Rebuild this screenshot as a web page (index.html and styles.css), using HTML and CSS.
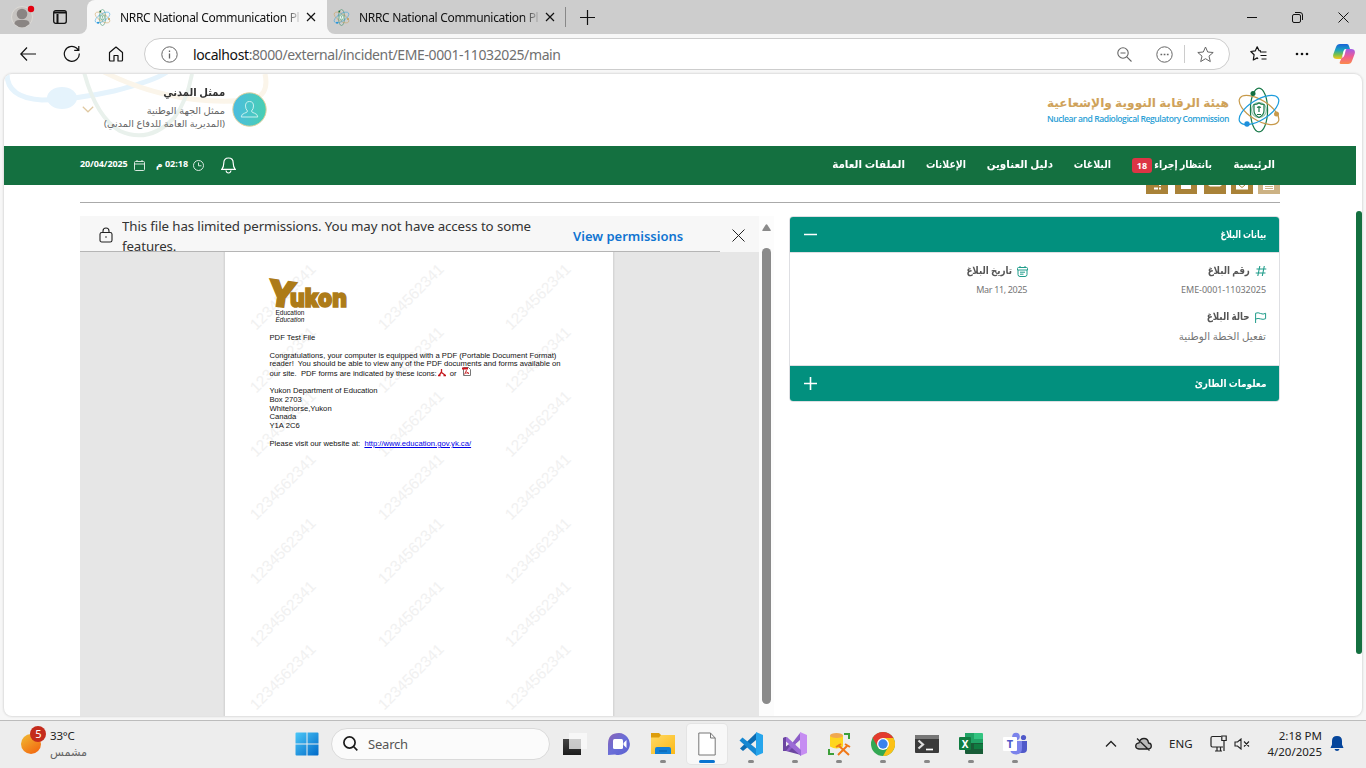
FILE: index.html
```html
<!DOCTYPE html>
<html lang="en">
<head>
<meta charset="utf-8">
<title>NRRC National Communication Platform</title>
<link rel="stylesheet" href="styles.css">
</head>
<body>
<svg class="defs" width="0" height="0">
  <defs>
    <linearGradient id="g-av" x1="0" x2="1"><stop offset="0" stop-color="#4cbce0"/><stop offset="1" stop-color="#48cfb2"/></linearGradient>
    <linearGradient id="g-sun" x1="0" y1="0" x2="0.7" y2="1"><stop offset="0" stop-color="#f1bd35"/><stop offset="1" stop-color="#f26a10"/></linearGradient>
    <linearGradient id="g-win" x1="0" y1="0" x2="1" y2="1"><stop offset="0" stop-color="#4cc8f8"/><stop offset="1" stop-color="#0069c8"/></linearGradient>
    <linearGradient id="g-dark" x1="0" y1="0" x2="0" y2="1"><stop offset="0" stop-color="#444"/><stop offset="1" stop-color="#1c1c1c"/></linearGradient>
    <linearGradient id="g-chat" x1="0" y1="0" x2="1" y2="1"><stop offset="0" stop-color="#8a63b5"/><stop offset=".5" stop-color="#6a6ed8"/><stop offset="1" stop-color="#5b5fcf"/></linearGradient>
    <linearGradient id="g-fold" x1="0" y1="0" x2="1" y2="1"><stop offset="0" stop-color="#ffd965"/><stop offset="1" stop-color="#fbb917"/></linearGradient>
    <linearGradient id="g-cop1" x1="0" y1="0" x2="0" y2="1"><stop offset="0" stop-color="#1a62d8"/><stop offset=".4" stop-color="#19a4c0"/><stop offset=".7" stop-color="#7bc04a"/><stop offset="1" stop-color="#fbc71c"/></linearGradient>
    <linearGradient id="g-cop2" x1="0" y1="0" x2="0" y2="1"><stop offset="0" stop-color="#a25be8"/><stop offset=".5" stop-color="#ee5c92"/><stop offset="1" stop-color="#fb8a4a"/></linearGradient>
    <symbol id="atom" viewBox="0 0 42 46">
      <g fill="none" stroke-width="1.200">
        <ellipse cx="21" cy="23" rx="8.600" ry="21.800" stroke="#1a7a4a"/>
        <ellipse cx="21" cy="23" rx="22.500" ry="10" transform="rotate(32 21 23)" stroke="#c79a4b"/>
        <ellipse cx="21" cy="23" rx="22.500" ry="10" transform="rotate(-32 21 23)" stroke="#1d9cdc"/>
        <circle cx="21" cy="23" r="7.500" stroke="#8fc3aa" fill="#eef6f2"/>
        <path d="M16 17.500q3 0 5-1.500 2 1.500 5 1.500v6q0 4.500-5 7-5-2.500-5-7z" stroke="#1a7a4a" fill="#fff"/>
        <path d="M21 20v5M19 27.500h4M19 20.500l2-.8 2 .8" stroke="#1a7a4a"/>
      </g>
      <circle cx="15" cy="6.500" r="2.500" fill="#146f40"/><circle cx="38.500" cy="27" r="2.500" fill="#c79a4b"/><circle cx="9" cy="37" r="2.700" fill="#1d8fdc"/>
    </symbol>
  </defs>
</svg>

<div class="tabstrip">
  <div class="strip-left">
    <svg class="profile" width="24" height="24" viewBox="0 0 24 24"><circle cx="11" cy="12" r="10.500" fill="#c6c3c0" stroke="#dcdad6"/><circle cx="11" cy="9" r="5.300" fill="#8a8583"/><path d="M3.500 19q0-4 5-4h5q5 0 5 4q-7.500 7-15 0z" fill="#8a8583"/><circle cx="20" cy="4" r="3.200" fill="#e3000f"/></svg>
    <svg class="workspaces" width="14" height="14" viewBox="0 0 14 14" fill="none" stroke="#111" stroke-width="1.300"><rect x=".7" y=".7" width="12.600" height="12.600" rx="2"/><path d="M1 2.500h12M4.500 4v9" stroke-width="2"/></svg>
  </div>
  <div class="tab active"><svg class="fav" width="17" height="17"><use href="#atom"/></svg><span class="tab-title">NRRC National Communication Pl</span><svg width="10" height="10" viewBox="0 0 10 10" stroke="#111" stroke-width="1.200"><path d="M1 1l8 8M9 1l-8 8"/></svg></div>
  <div class="tab-rest">
    <div class="tab"><svg class="fav" width="17" height="17"><use href="#atom"/></svg><span class="tab-title">NRRC National Communication Pl</span><svg width="10" height="10" viewBox="0 0 10 10" stroke="#111" stroke-width="1.200"><path d="M1 1l8 8M9 1l-8 8"/></svg></div>
    <i class="tab-sep"></i>
    <svg class="plus" width="15" height="15" viewBox="0 0 15 15" stroke="#111" stroke-width="1.200"><path d="M7.500 0v15M0 7.500h15"/></svg>
    <div class="win-buttons">
      <svg width="10" height="11" viewBox="0 0 10 11" stroke="#111"><path d="M0 5.500h10"/></svg>
      <svg width="11" height="11" viewBox="0 0 11 11" fill="none" stroke="#111"><rect x=".5" y="2.500" width="8" height="8" rx="1.500"/><path d="M3 .5h5q2.500 0 2.500 2.500v5"/></svg>
      <svg width="11" height="11" viewBox="0 0 11 11" stroke="#111"><path d="M.5.5l10 10M10.500.5l-10 10"/></svg>
    </div>
  </div>
</div>

<div class="toolbar">
  <div class="nav-buttons">
    <svg width="16" height="14" viewBox="0 0 16 14" fill="none" stroke="#111" stroke-width="1.200"><path d="M7 .5L.8 7 7 13.500M.8 7H16"/></svg>
    <svg width="18" height="18" viewBox="0 0 18 18" fill="none" stroke="#111" stroke-width="1.200"><path d="M16.300 8.500A7.500 7.500 0 1 1 13.500 3l2 2M15.800 1v4.300h-4.600"/></svg>
    <svg width="16" height="16" viewBox="0 0 16 16" fill="none" stroke="#111" stroke-width="1.200" stroke-linejoin="round"><path d="M1.500 6.500L8 1l6.500 5.500V14q0 1-1 1H10V9.500H6V15H2.500q-1 0-1-1z"/></svg>
  </div>
  <div class="address">
    <svg width="17" height="17" viewBox="0 0 17 17" fill="none" stroke="#666"><circle cx="8.500" cy="8.500" r="7.700"/><path d="M8.500 7.500v5M8.500 4.500v1.500" stroke-width="1.300"/></svg>
    <span class="url"><b>localhost</b>:8000/external/incident/EME-0001-11032025/main</span>
    <svg width="15" height="15" viewBox="0 0 15 15" fill="none" stroke="#666" stroke-width="1.100"><circle cx="6" cy="6" r="5.200"/><path d="M3.500 6h5M9.800 9.800l4.700 4.700"/></svg>
    <svg class="dots-c" width="17" height="17" viewBox="0 0 17 17" fill="none" stroke="#666"><circle cx="8.500" cy="8.500" r="7.700"/><path d="M4.500 8.500h1.700M7.700 8.500h1.700M10.900 8.500h1.700" stroke-width="1.600"/></svg>
    <i class="addr-sep"></i>
    <svg width="17" height="17" viewBox="0 0 17 17" fill="none" stroke="#666" stroke-linejoin="round"><path d="M8.500 1l2.200 5 5.500.5-4.200 3.600 1.300 5.500-4.800-2.900-4.800 2.900L5 10.100.8 6.500l5.500-.5z"/></svg>
  </div>
  <svg class="favs" width="17" height="16" viewBox="0 0 17 16" fill="none" stroke="#111" stroke-width="1.200" stroke-linejoin="round"><path d="M10 6h6.500M10.500 9.500h6M11.500 13h5M11 4.800l-2-.2L7.200.8 5.200 4.900.8 5.500l3.300 3.200-.8 5.300 3.900-2.100.8 1"/></svg>
  <svg class="more" width="14" height="4" viewBox="0 0 14 4" fill="#111"><circle cx="2" cy="2" r="1.300"/><circle cx="7" cy="2" r="1.300"/><circle cx="12" cy="2" r="1.300"/></svg>
  <svg class="copilot" width="22" height="20" viewBox="0 0 22 20"><path d="M7 0h7q1.500 0 2 2l1 3h-4q-2 0-2.500 2L8.500 15H4Q-1 15 .4 10L3 3Q4 0 7 0z" fill="url(#g-cop1)"/><path d="M15 20H8q-2 0-1-2.500L11 9q1-4 3-4h4q5 0 3.600 5L19 17q-1 3-4 3z" fill="url(#g-cop2)"/><path d="M9 14l2-7q.6-2 2-2l-1.500 6q-1 3-2.500 3z" fill="#fff"/></svg>
</div>

<main class="page">
  <div class="page-main">
    <header class="site-head">
      <svg class="orbits" width="270" height="66" viewBox="0 0 270 66" fill="none">
        <ellipse cx="58" cy="24" rx="15" ry="11" fill="#e5f3fc"/>
        <path d="M3 0Q3 24 38 26Q70 26 110 17Q150 7 163-2" stroke="#e5f3fc" stroke-width="5"/>
        <path d="M100-2Q170 33 245 26Q266 23 261 0" stroke="#fbf5ea" stroke-width="5"/>
        <path d="M80-2Q92 43 116 57Q145 70 170 44Q183 27 188 0" stroke="#e9f1ec" stroke-width="4"/>
      </svg>
      <svg class="chev" width="12" height="7" viewBox="0 0 12 7" fill="none" stroke="#e0c9a2" stroke-width="1.200"><path d="M.8.8L6 5.800 11.200.8"/></svg>
      <div class="user" dir="rtl">
        <div class="user-name"><span class="t1">ممثل المدني</span></div>
        <div class="user-line"><span class="t2">ممثل الجهة الوطنية</span></div>
        <div class="user-line"><span class="t3">(المديرية العامة للدفاع المدني)</span></div>
      </div>
      <svg class="avatar" width="35" height="35" viewBox="0 0 35 35"><circle cx="17.500" cy="17.500" r="16.700" fill="url(#g-av)" stroke="#e0cf9c"/><path d="M17.500 9.500q4 0 4 4.500 0 3-2 5 0 1.500 3 2.200 3 .8 3.300 3.800H9.200q.3-3 3.300-3.800 3-.7 3-2.200-2-2-2-5 0-4.500 4-4.500z" fill="none" stroke="#c9f0ee"/></svg>
      <div class="brand">
        <div class="brand-ar" dir="rtl"><span class="t4">هيئة الرقابة النووية والإشعاعية</span></div>
        <div class="brand-en">Nuclear and Radiological Regulatory Commission</div>
      </div>
      <svg class="logo" width="42" height="46"><use href="#atom"/></svg>
    </header>

    <nav class="site-nav">
      <span class="nav-date">20/04/2025</span>
      <svg width="11" height="11" viewBox="0 0 11 11" fill="none" stroke="#d8e8df"><rect x=".5" y="1.500" width="10" height="9" rx="1"/><path d="M.5 4h10M3 0v2M8 0v2"/></svg>
      <span class="nav-time" dir="rtl">02:18 م</span>
      <svg width="11" height="11" viewBox="0 0 11 11" fill="none" stroke="#d8e8df"><circle cx="5.500" cy="5.500" r="5"/><path d="M5.500 2.500v3.300h3"/></svg>
      <svg class="bell" width="15" height="17" viewBox="0 0 15 17" fill="none" stroke="#fff" stroke-width="1.200"><path d="M7.500 1q4.700 0 4.700 5 0 4 2 6.300H.8Q2.800 10 2.800 6q0-5 4.700-5zM5 13.500q.5 2.500 2.500 2.500t2.500-2.500"/></svg>
      <div class="menu" dir="rtl">
        <span class="m1">الرئيسية</span>
        <span class="m2">بانتظار إجراء</span><b class="badge">18</b>
        <span class="m3">البلاغات</span>
        <span class="m4">دليل العناوين</span>
        <span class="m5">الإعلانات</span>
        <span class="m6">الملفات العامة</span>
      </div>
    </nav>

    <div class="actions">
      <i class="act a1"><svg width="22" height="9" viewBox="0 0 22 9" fill="#fff"><path d="M8 2.500h4v2H8zM13 0h2v1h-2zM13 2.500h2v2h-2z"/></svg></i>
      <i class="act a2"><svg width="22" height="9" viewBox="0 0 22 9" fill="#fff"><path d="M6 0h10v4H6z"/></svg></i>
      <i class="act a3"><svg width="22" height="9" viewBox="0 0 22 9" fill="#fff"><path d="M4 0h14l-2 1.500H6z"/></svg></i>
      <i class="act a4"><svg width="22" height="9" viewBox="0 0 22 9"><path d="M5 0h12v4.500H5z" fill="#fff"/><path d="M8 0l3 2.500L14 0" fill="none" stroke="#a98238"/></svg></i>
      <i class="act a5"><svg width="22" height="9" viewBox="0 0 22 9"><path d="M5 0h11v5H5z" fill="#fff"/><path d="M7 1.500h8M7 3.500h8" stroke="#ccb284"/></svg></i>
    </div>

    <div class="columns">
      <section class="viewer">
        <div class="pdf">
          <div class="notice">
            <svg class="lock" width="14" height="16" viewBox="0 0 14 16" fill="none" stroke="#222" stroke-width="1.100"><rect x="1" y="5.500" width="12" height="9.500" rx="1.800"/><path d="M4 5.500V4q0-3 3-3t3 3v1.500"/><circle cx="7" cy="10" r=".8" fill="#222" stroke="none"/></svg>
            <div class="notice-text">This file has limited permissions. You may not have access to some<br>features.</div>
            <div class="notice-link">View permissions</div>
            <svg class="notice-x" width="13" height="13" viewBox="0 0 13 13" stroke="#222"><path d="M.5.5l12 12M12.500.5l-12 12"/></svg>
          </div>
          <div class="canvas">
            <div class="sheet">
              <div class="marks">
                <span>1234562341</span><span>1234562341</span><span>1234562341</span>
                <span>1234562341</span><span>1234562341</span><span>1234562341</span>
                <span>1234562341</span><span>1234562341</span><span>1234562341</span>
                <span>1234562341</span><span>1234562341</span><span>1234562341</span>
                <span>1234562341</span><span>1234562341</span><span>1234562341</span>
                <span>1234562341</span><span>1234562341</span><span>1234562341</span>
                <span>1234562341</span><span>1234562341</span><span>1234562341</span>
              </div>
              <div class="doc">
                <svg class="yukon" width="82" height="34" viewBox="0 0 82 34" fill="#ad7b18" stroke="#ad7b18">
                  <text x="-3" y="31" font-family="Inter" font-weight="900" font-size="36" stroke-width="1.400" textLength="29" lengthAdjust="spacingAndGlyphs" transform="rotate(8 12 20)">Y</text>
                  <text x="20" y="30.500" font-family="Inter" font-weight="900" font-size="26" stroke-width="1.600" textLength="57" lengthAdjust="spacingAndGlyphs">ukon</text>
                </svg>
                <div class="edu">Education<br><i>Éducation</i></div>
                <p class="p1">PDF Test File</p>
                <p class="p2">Congratulations, your computer is equipped with a PDF (Portable Document Format)</p>
                <p class="p3">reader!&nbsp; You should be able to view any of the PDF documents and forms available on</p>
                <p class="p4"><span>our site.&nbsp; PDF forms are indicated by these icons:</span><svg class="ic1" width="8" height="8" viewBox="0 0 8 8" fill="none" stroke="#c4161c" stroke-width="1.300"><path d="M3.500 0v3L1 6.500M3.500 3.500L7 6M0 6.500h2.500M5.500 6.500H8"/></svg><span class="or">or</span><svg class="ic2" width="9" height="9" viewBox="0 0 9 9" fill="#fff"><path d="M1.500.5h5l2 2v6h-7z" stroke="#777"/><path d="M0 .5h6v2H0z" fill="#d0121a"/><path d="M4.500 3L2.500 7.500M4.500 4.500L7 7M3 6h4" stroke="#c4161c" stroke-width=".8"/></svg></p>
                <div class="addr">Yukon Department of Education<br>Box 2703<br>Whitehorse,Yukon<br>Canada<br>Y1A 2C6</div>
                <p class="p5">Please visit our website at:&nbsp; <u>http://www.education.gov.yk.ca/</u></p>
              </div>
            </div>
          </div>
        </div>
        <div class="vscroll"><svg width="9" height="8" viewBox="0 0 9 8"><path d="M3.500 1q1-1.500 2 0l3.200 5q.3 1-.7 1H1Q0 7 .4 6z" fill="#8a8a8a"/></svg><i></i></div>
      </section>

      <section class="card">
        <div class="card-head"><svg width="13" height="13" viewBox="0 0 13 13" stroke="#fff" stroke-width="1.500"><path d="M0 6.500h13"/></svg><span class="c1" dir="rtl">بيانات البلاغ</span></div>
        <div class="card-body" dir="rtl">
          <div class="field">
            <div class="label"><svg width="12" height="12" viewBox="0 0 12 12" fill="none" stroke="#1f9c8a" stroke-width="1.100"><path d="M4.800 1L2.800 11M9.300 1l-2 10M1.500 4h9.800M.7 8h9.800"/></svg><span class="l1">رقم البلاغ</span></div>
            <div class="value v1">EME-0001-11032025</div>
          </div>
          <div class="field">
            <div class="label"><svg width="11" height="11" viewBox="0 0 11 11" fill="none" stroke="#1f9c8a"><path d="M1.500 1.500h8q1 0 1 1v1.500H.5V2.500q0-1 1-1zM1 4v4.500q0 2 2 2h5q2 0 2-2V4M3 0v2M8 0v2M3 6.200h5M3 8.200h3.500"/></svg><span class="l2">تاريخ البلاغ</span></div>
            <div class="value v2" dir="ltr">Mar 11, 2025</div>
          </div>
          <div class="field">
            <div class="label"><svg width="12" height="11" viewBox="0 0 12 11" fill="none" stroke="#1f9c8a"><path d="M.6 11V1.200q2.500-1 5 .3t5-.2v5.400q-2.500 1.200-5 .2t-5 .1"/></svg><span class="l3">حالة البلاغ</span></div>
            <div class="value"><span class="v3">تفعيل الخطة الوطنية</span></div>
          </div>
        </div>
        <div class="card-head second"><svg width="13" height="13" viewBox="0 0 13 13" stroke="#fff" stroke-width="1.600"><path d="M0 6.500h13M6.500 0v13"/></svg><span class="c2" dir="rtl">معلومات الطارئ</span></div>
      </section>
    </div>
  </div>
  <div class="page-scroll"><i></i></div>
</main>

<footer class="taskbar">
  <svg class="weather" width="26" height="30" viewBox="0 0 26 30"><circle cx="10" cy="18" r="10" fill="url(#g-sun)"/><circle cx="17" cy="8" r="8" fill="#c42b1c"/><text x="17.500" y="12" text-anchor="middle" class="wnum">5</text></svg>
  <div class="wtext"><div>33°C</div><div class="sunny"><span dir="rtl">مشمس</span></div></div>
  <svg class="start" width="24" height="24" viewBox="0 0 24 24" fill="url(#g-win)"><path d="M.5 1.500q0-1 1-1H11.500v11H.5zM12.500.5h10q1 0 1 1v10h-11zM.5 12.500h11v11h-10q-1 0-1-1zM12.500 12.500h11v10q0 1-1 1h-10z"/></svg>
  <div class="search"><svg width="15" height="15" viewBox="0 0 15 15" fill="none" stroke="#1c1c1c" stroke-width="1.700"><circle cx="6.500" cy="6.500" r="5.600"/><path d="M10.500 10.500l3.800 3.800"/></svg><span>Search</span></div>
  <div class="apps">
    <div class="app"><svg width="24" height="24" viewBox="0 0 24 24"><path d="M0 7h18v16H0z" fill="url(#g-dark)"/><path d="M6 1h18v16H6z" fill="#fafafa" opacity=".75"/></svg></div>
    <div class="app"><svg width="24" height="24" viewBox="0 0 24 24"><path d="M12 1a11.500 11 0 1 1-4 21.500L1 23V12Q1 1 12 1z" fill="url(#g-chat)"/><rect x="6" y="7" width="10" height="10" rx="1.500" fill="#fff"/><path d="M16.500 11l3-3v8l-3-3z" fill="#fff"/></svg></div>
    <div class="app run"><svg width="24" height="24" viewBox="0 0 24 24"><path d="M0 1h8l2 2v4H0z" fill="#dd9d0c"/><path d="M0 5.500h8l2-2.500h14v19H0z" fill="url(#g-fold)"/><path d="M4 22v-5q0-2 2-2h12q2 0 2 2v5z" fill="#1280d6"/><path d="M8 19h8" stroke="#0a5ea8"/></svg></div>
    <div class="app current"><svg width="18" height="24" viewBox="0 0 18 24" fill="#fff" stroke="#777"><path d="M.8 1h11.700l4.700 5v17H.8zM12.500 1v5h4.700"/></svg></div>
    <div class="app run"><svg width="24" height="24" viewBox="0 0 24 24"><path d="M1 16.500L17 1v7L4 19z" fill="#0b6cb3"/><path d="M17 0l7 3v18l-7 3z" fill="#26a5ec"/><path d="M3.500 5.500L17 16.500v7L.5 8.500z" fill="#1688d2"/></svg></div>
    <div class="app run"><svg width="24" height="24" viewBox="0 0 24 24"><path d="M0 6l3-1 15 14v4L3 19H0z" fill="#6b45a0"/><path d="M3 19L17 1v7L6 19z" fill="#8c5cc7"/><path d="M17 0l7 3v18l-7 3z" fill="#c68df2"/><path d="M4 5l14 13v6L0 8z" fill="#9b6bd6"/><path d="M0 6l3-1v14H0z" fill="#6b45a0"/><path d="M3 9.500v5L6 12zM17 8.500v7L12.500 12z" fill="#ededed"/></svg></div>
    <div class="app run"><svg width="24" height="24" viewBox="0 0 24 24"><path d="M3 3.500h13v11q-6.500 4-13 0z" fill="#ffd51e"/><ellipse cx="9.500" cy="3.500" rx="6.500" ry="2.600" fill="#f0a850"/><path d="M17 2h5v5M2 17v5h5" fill="none" stroke="#3c9f3a" stroke-width="2"/><path d="M11 23l9-9M11 13l11 10M18 12l5 3M9 15l5-3" stroke="#f07818" stroke-width="2"/></svg></div>
    <div class="app run"><svg width="24" height="24" viewBox="0 0 24 24"><circle cx="12" cy="12" r="12" fill="#34a853"/><path d="M1.600 6A12 12 0 0 1 22.400 6H12v6L6.800 15z" fill="#e33b2e"/><path d="M22.400 6A12 12 0 0 1 12 24l5.200-9L12 6z" fill="#fbc116"/><circle cx="12" cy="12" r="6" fill="#fff"/><circle cx="12" cy="12" r="4.700" fill="#3b82ec"/></svg></div>
    <div class="app run"><svg width="24" height="24" viewBox="0 0 24 24"><rect y="3" width="24" height="18" rx="1" fill="#3a3a3a"/><path d="M0 4q0-1 1-1h22q1 0 1 1v3H0z" fill="#777"/><path d="M3.500 8.500l4.500 4-4.500 4" fill="none" stroke="#ddd" stroke-width="2.200"/><path d="M11 17.500h7" stroke="#fff" stroke-width="1.700"/></svg></div>
    <div class="app run"><svg width="24" height="24" viewBox="0 0 24 24"><path d="M6 1h9v10H6z" fill="#21a366"/><path d="M15 1h8q1 0 1 1v5h-9z" fill="#33c481"/><path d="M15 7h9v5h-9z" fill="#21a366"/><path d="M6 11h18v11H7q-1 0-1-1z" fill="#185c37"/><path d="M15 12h9v5h-9z" fill="#107c41"/><rect y="5" width="12" height="13" rx="1" fill="#107c41"/><text x="6" y="15.500" text-anchor="middle" class="xl">X</text></svg></div>
    <div class="app run"><svg width="24" height="24" viewBox="0 0 24 24"><circle cx="13" cy="4.500" r="3.800" fill="#7b83eb"/><circle cx="20.500" cy="5.500" r="2.600" fill="#5059c9"/><path d="M17 9h7v8q0 4-4 4h-3z" fill="#5059c9"/><path d="M7 9h12v7q0 6.500-6 6.500T7 16z" fill="#7b83eb"/><rect y="5" width="14" height="14" rx="1" fill="#fff"/><text x="7" y="16" text-anchor="middle" class="tm">T</text></svg></div>
  </div>
  <div class="tray">
    <svg class="caret" width="12" height="8" viewBox="0 0 12 8" fill="none" stroke="#222" stroke-width="1.300"><path d="M1 6.500l5-5 5 5"/></svg>
    <svg class="cloud" width="17" height="14" viewBox="0 0 17 14" fill="#bbb" stroke="#222" stroke-width="1.300"><path d="M4 12q-3.300-.3-3.300-3T4 5.800Q5 1.500 9 1.500t4.500 4.500q2.800.3 2.800 3t-3 3zM2 1.500L14.500 13.500"/></svg>
    <span class="lang">ENG</span>
    <svg class="net" width="17" height="17" viewBox="0 0 17 17" fill="none" stroke="#222" stroke-width="1.200"><path d="M11 1.500H2.500q-1.500 0-1.500 1.500v7.500Q1 12 2.500 12H13M5 16h7M7 12v4M10.500 12v4M14 6v10M11.800 1h4.400v4.500h-4.400z"/></svg>
    <svg class="vol" width="16" height="12" viewBox="0 0 16 12" fill="none" stroke="#222" stroke-width="1.100"><path d="M1 4h2.500L7 1v10L3.500 8H1zM10 3.500l5 5M15 3.500l-5 5"/></svg>
    <div class="clock"><div class="k1">2:18 PM</div><div class="k2">4/20/2025</div></div>
    <svg class="notif" width="14" height="15" viewBox="0 0 14 15" fill="#05459b"><path d="M7 0q5 0 5 5v3.500L13.500 12H.5L2 8.500V5q0-5 5-5zM4.500 13h5q-.5 2-2.500 2t-2.500-2z"/></svg>
  </div>
</footer>
</body>
</html>
```
FILE: styles.css
```css
* { box-sizing: border-box; }
body { margin: 0; width: 1366px; height: 768px; overflow: hidden; display: flex; flex-direction: column; background: #f7f7f7; font-family: "Noto Sans", "DejaVu Sans", sans-serif; color: #111; }
svg { display: block; flex: none; }
span { white-space: nowrap; }
.defs { position: absolute; }

/* browser tabs */
.tabstrip { height: 34px; flex: none; display: flex; background: #f7f7f7; }
.strip-left { width: 87px; display: flex; align-items: center; background: #cdcdcd; border-bottom-right-radius: 8px; padding-left: 11px; box-shadow: 8px -20px 0 #cdcdcd; clip-path: inset(0 -8px 0 0); }
.workspaces { margin-left: 18px; }
.tab { width: 239px; padding: 0 11px 0 7px; display: flex; align-items: center; font-size: 12px; }
.tab.active { width: 240px; background: #f7f7f7; border-radius: 8px 8px 0 0; position: relative; }
.tab .fav { width: 17px; height: 17px; }
.tab-title { width: 179px; margin: 0 7px 0 9px; overflow: hidden; letter-spacing: -.32px; mask-image: linear-gradient(90deg, #000 164px, transparent 182px); }
.tab-rest { flex: 1; display: flex; align-items: center; background: #cdcdcd; border-bottom-left-radius: 8px; }
.tab-rest .tab { width: 238px; padding-left: 6px; padding-right: 0; }
.tab-sep { width: 1px; height: 20px; background: #888; }
.plus { margin-left: 14px; }
.win-buttons { margin-left: auto; display: flex; gap: 35px; padding-right: 17.500px; }

/* address row */
.toolbar { height: 40px; flex: none; display: flex; align-items: center; }
.nav-buttons { width: 144px; padding-left: 20px; display: flex; align-items: center; gap: 27px; }
.address { width: 1086px; height: 32px; border: 1px solid #cdcdcd; border-radius: 16px; background: #fff; display: flex; align-items: center; padding-left: 16px; }
.url { margin-left: 15px; width: 923.500px; font-size: 14px; letter-spacing: -.39px; color: #707070; }
.url b { font-weight: 400; color: #111; }
.dots-c { margin-left: 24px; }
.addr-sep { width: 1px; height: 18px; background: #ccc; margin: 0 12px 0 11px; }
.favs { margin-left: 20px; }
.more { margin-left: 28px; }
.copilot { margin-left: 24px; }

/* page frame */
.page { margin: 0 4px; height: 642px; flex: none; display: flex; background: #fff; border-radius: 8px; overflow: hidden; box-shadow: 0 0 2px 1px #dcdcdc; }
.page-main { width: 1352px; }
.page-scroll { width: 6px; padding-top: 137px; }
.page-scroll i { display: block; height: 443px; border-radius: 3px; background: #147040; }
.site-head { height: 72px; position: relative; display: flex; padding-left: 78px; }
.orbits { position: absolute; left: 0; top: 0; }
.chev { margin-top: 32px; }
.user { width: 131px; padding-top: 9px; position: relative; }
.user-name, .user-line { display: flex; color: #666; height: 14px; line-height: 14px; }
.user-name { height: 20px; line-height: 18px; font-size: 11px; font-weight: 700; color: #333; }
.t1 { transform: scaleX(.91); transform-origin: 100% 50%; }
.t2 { font-size: 9.850px; }
.t3 { font-size: 9.700px; }
.avatar { margin: 18px 0 0 7px; position: relative; }
.brand { width: 190px; margin-left: auto; padding-top: 19px; }
.brand-ar { display: flex; height: 19px; line-height: 19px; font-size: 12.200px; font-weight: 700; color: #cfa25a; }
.brand-en { font-family: "Open Sans", sans-serif; font-size: 8.600px; font-weight: 600; height: 15px; line-height: 14px; color: #2c9fd6; white-space: nowrap; letter-spacing: -.46px; margin-left: 8px; }
.logo { margin: 13px 76px 0 9px; }

.site-nav { height: 39px; background: #147040; color: #fff; display: flex; align-items: center; padding: 0 0 5px 76px; font-weight: 700; }
.site-nav > svg { margin-top: 5px; }
.nav-date { width: 54px; font-size: 9px; letter-spacing: -.1px; }
.nav-time { width: 48px; font-size: 9px; text-align: left; padding-left: 11px; letter-spacing: -.2px; }
.site-nav > .bell { margin: 4px 0 0 17px; }
.menu { margin-left: auto; padding-right: 81px; display: flex; align-items: center; font-size: 11px; font-weight: 600; }
.menu span { flex: none; transform-origin: 100% 50%; }
.m1 { width: 42px; transform: scaleX(.91); }
.m2 { width: 58px; margin-right: 21px; transform: scaleX(.84); }
.badge { width: 20px; height: 15px; margin: 4px 2px 0 0; border-radius: 3px; background: #dc3545; font: 700 9px/15px "Noto Sans", sans-serif; text-align: center; }
.m3, .m4, .m5, .m6 { margin-right: 21px; }
.m3 { width: 37px; transform: scaleX(.86); }
.m4 { width: 67px; transform: scaleX(.94); }
.m5 { width: 40px; margin-right: 20px; transform: scaleX(.85); }
.m6 { width: 73px; transform: scaleX(.94); }

.actions { height: 18px; margin: 0 76px; border-bottom: 1px solid #aaa; display: flex; justify-content: flex-end; }
.act { width: 22px; height: 9px; background: #a98238; margin-left: 7px; }
.a4 { margin-left: 5px; }
.a5 { margin-left: 5px; background: #ccb284; }
.columns { display: flex; padding: 13px 76px 0; }

/* document viewer */
.viewer { width: 694px; height: 500px; display: flex; flex: none; }
.pdf { width: 679px; background: #e6e6e6; }
.notice { height: 36px; background: linear-gradient(#b5b5b5, #b5b5b5) 0 100% / 640px 1px no-repeat, #f7f7f7; display: flex; overflow: hidden; }
.lock { margin: 11px 9px 0 19px; }
.notice-text { width: 424px; height: 35px; overflow: hidden; font-size: 13.300px; letter-spacing: -.1px; line-height: 20px; color: #333; white-space: nowrap; }
.notice-link { width: 140px; margin-left: 27px; font-size: 13px; font-weight: 600; line-height: 40px; color: #0f74d1; white-space: nowrap; }
.notice-x { margin-top: 13px; margin-left: 19px; }
.canvas { padding-left: 145px; }
.sheet { width: 388px; height: 464px; background: #fff; box-shadow: 0 0 2px 1px #cfcfcf; position: relative; overflow: hidden; clip-path: inset(0 -2px); }
.marks { position: absolute; left: -6px; top: 13px; display: grid; grid-template-columns: repeat(3, 127.500px); grid-auto-rows: 63.400px; font: 15.400px/64px "Liberation Sans", sans-serif; color: #f1f1f1; }
.marks span { transform: rotate(-45deg); text-align: center; }
.doc { position: relative; padding: 24px 0 0 44.500px; font: 7.670px/9px "Liberation Sans", sans-serif; color: #111; }
.doc p { margin: 0; white-space: nowrap; height: 9px; }
.yukon { overflow: visible; }
.edu { padding: 0 0 0 6px; margin-top: -1px; font-size: 6.500px; line-height: 7px; }
.doc .p1 { margin-top: 10px; }
.doc .p2 { margin-top: 9px; }
.doc .p3 { margin-top: -1px; }
.doc .p4 { display: flex; align-items: center; height: 11px; }
.ic1 { margin: -2px 0 0 1px; }
.ic2 { margin-top: -4px; }
.or { margin: 0 5px 0 4px; }
.addr { margin-top: 8px; line-height: 8.800px; }
.doc .p5 { margin-top: 8px; }
.doc u { color: #0000e8; }
.vscroll { width: 15px; background: #fcfcfc; padding: 8px 0 0 3px; }
.vscroll i { display: block; width: 9px; height: 456px; margin-top: 16px; border-radius: 5px; background: #8a8a8a; }

/* incident details */
.card { width: 491px; height: 186px; flex: none; margin-left: 15px; border: 1px solid #dedfe3; border-radius: 4px; overflow: hidden; }
.card-head { height: 35px; background: #02907e; color: #fff; display: flex; align-items: center; justify-content: space-between; padding: 0 13px 0 14px; font-size: 10.500px; font-weight: 700; }
.card-head span { padding-bottom: 2px; transform-origin: 100% 50%; }
.c1 { transform: scaleX(.76); }
.c2 { transform: scaleX(.85); }
.card-body { height: 114px; border: solid #dedfe3; border-width: 1px 0; display: grid; grid-template-columns: 239px 230px; grid-auto-rows: 46px; padding: 8px 13px 0 0; }
.label { display: flex; align-items: center; gap: 4px; height: 20px; font-size: 10.500px; font-weight: 700; color: #555; }
.label svg { position: relative; left: 1px; }
.label span { transform-origin: 100% 50%; transform: scaleX(.83); padding-bottom: 2px; }
.value { height: 18px; line-height: 18px; font-size: 9px; letter-spacing: -.05px; color: #757575; text-align: right; }
.v2 { letter-spacing: -.35px; }
.v3 { font-size: 10.300px; letter-spacing: 0; }

/* taskbar */
.taskbar { margin-top: 4px; height: 48px; flex: none; background: #ededed; border-top: 1px solid #bcbcbc; display: flex; align-items: center; padding-bottom: 2px; }
.weather { margin: -6px 0 0 21px; }
.wnum { font: 11px "Noto Sans", sans-serif; fill: #fff; }
.wtext { width: 80px; margin-left: 3px; font-size: 11.500px; line-height: 16px; letter-spacing: -.2px; color: #222; }
.sunny { color: #666; font-size: 11.300px; letter-spacing: 0; }
.start { margin-left: 165px; }
.search { width: 219px; height: 32px; margin-left: 12px; padding-left: 11px; border: 1px solid #dadada; border-radius: 16px; background: #fbfbfb; display: flex; align-items: center; gap: 10px; font-size: 13px; letter-spacing: -.2px; color: #555; }
.apps { display: flex; margin-left: 5px; gap: 4px; }
.app { width: 40px; height: 40px; display: flex; align-items: center; justify-content: center; position: relative; }
.app.current { background: #f8f8f8; border-radius: 4px; box-shadow: 0 0 0 1px #e4e4e4; }
.app.run::after, .app.current::after { content: ""; position: absolute; left: 17px; bottom: 1px; width: 6px; height: 3px; border-radius: 2px; background: #888; }
.app.current::after { left: 12px; width: 16px; background: #0a74d0; }
.xl { font: 700 10px "Noto Sans", sans-serif; fill: #fff; }
.tm { font: 700 11px "Noto Sans", sans-serif; fill: #5059c9; }
.tray { flex: 1; display: flex; align-items: center; color: #222; font-size: 11.500px; }
.caret { margin-left: 70px; }
.cloud { margin-left: 18px; }
.lang { width: 24px; margin-left: 17px; }
.net { margin-left: 17px; }
.vol { margin-left: 7px; }
.clock { width: 72px; text-align: right; line-height: 16px; letter-spacing: 0; }
.notif { margin-left: 8px; }
```
